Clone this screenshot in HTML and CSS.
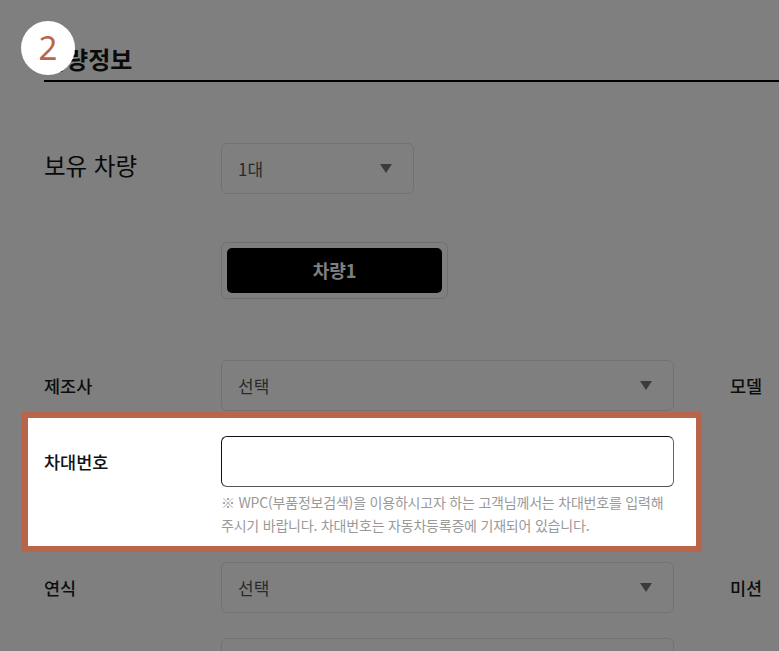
FILE: index.html
```html
<!DOCTYPE html>
<html lang="ko">
<head>
<meta charset="utf-8">
<title>차량정보</title>
<link rel="stylesheet" href="styles.css">
</head>
<body>
<div class="page">
  <div class="badge">2</div>
  <h2 class="title">차량정보</h2>

  <div class="row row-count">
    <div class="label label-lg">보유 차량</div>
    <div class="select select-sm"><span>1대</span><i class="arrow"></i></div>
  </div>

  <div class="row row-tabs">
    <div class="label"></div>
    <div class="tabs"><div class="tab">차량1</div></div>
  </div>

  <div class="row">
    <div class="label">제조사</div>
    <div class="select"><span>선택</span><i class="arrow"></i></div>
    <div class="label2">모델</div>
  </div>

  <div class="row row-vin">
    <div class="highlight"></div>
    <div class="label label-strong">차대번호</div>
    <div class="field">
      <div class="input"></div>
      <p class="help">※ WPC(부품정보검색)을 이용하시고자 하는 고객님께서는 차대번호를 입력해<br>주시기 바랍니다. 차대번호는 자동차등록증에 기재되어 있습니다.</p>
    </div>
  </div>

  <div class="row">
    <div class="label">연식</div>
    <div class="select"><span>선택</span><i class="arrow"></i></div>
    <div class="label2">미션</div>
  </div>

  <div class="row">
    <div class="label"></div>
    <div class="select"><span></span></div>
  </div>
</div>
</body>
</html>
```
FILE: styles.css
```css
html, body {
  margin: 0;
  padding: 0;
  background: #ffffff;
  overflow: hidden;
}

body {
  width: 779px;
  height: 651px;
  font-family: "Noto Sans CJK KR", "Noto Sans", sans-serif;
  color: #222;
}

.page {
  position: relative;
  width: 1000px;
  padding: 44px 0 0 44px;
  box-sizing: border-box;
}

.badge {
  position: absolute;
  left: 21px;
  top: 21px;
  width: 54px;
  height: 54px;
  border-radius: 50%;
  background: #fff;
  color: #b9654b;
  font-family: "Noto Sans", sans-serif;
  font-size: 33px;
  line-height: 54px;
  text-align: center;
  z-index: 10;
}

.title {
  margin: 0;
  font-size: 24px;
  font-weight: 700;
  line-height: 30px;
  color: #151515;
  padding-bottom: 6px;
  border-bottom: 2px solid #000;
}

.row {
  display: flex;
  align-items: flex-start;
  margin-bottom: 25px;
}

.row-count {
  margin-top: 61px;
  margin-bottom: 48px;
}

.row-tabs {
  margin-bottom: 61px;
}

.label {
  width: 177px;
  flex: none;
  font-size: 17.5px;
  font-weight: 500;
  line-height: 51px;
  color: #1a1a1a;
  white-space: nowrap;
}

.label-lg {
  font-size: 23.5px;
  font-weight: 400;
  line-height: 44px;
  color: #111;
}

.label-strong {
  font-weight: 500;
  color: #111;
}

.label2 {
  margin-left: 56px;
  font-size: 17.5px;
  font-weight: 500;
  line-height: 51px;
  color: #1a1a1a;
  white-space: nowrap;
}

.select {
  width: 453px;
  height: 51px;
  box-sizing: border-box;
  border: 1px solid #e2e2e2;
  border-radius: 6px;
  background: #fff;
  display: flex;
  align-items: center;
  justify-content: space-between;
  padding: 0 21px 0 16px;
  font-size: 17px;
  color: #555;
  flex: none;
}

.select-sm {
  width: 193px;
}

.arrow {
  width: 0;
  height: 0;
  border-left: 6px solid transparent;
  border-right: 6px solid transparent;
  border-top: 9px solid #777;
}

.tabs {
  width: 227px;
  height: 57px;
  box-sizing: border-box;
  border: 1px solid #e0e0e0;
  border-radius: 6px;
  padding: 5px;
}

.tab {
  height: 45px;
  border-radius: 5px;
  background: #000;
  color: #fff;
  font-size: 18px;
  font-weight: 700;
  line-height: 45px;
  text-align: center;
}

.row-vin {
  position: relative;
  width: 630px;
}

.highlight {
  position: absolute;
  left: -22px;
  top: -24px;
  right: -28px;
  bottom: -15px;
  border: 6px solid #b9654b;
  box-sizing: border-box;
  box-shadow: 0 0 0 2000px rgba(0, 0, 0, 0.5);
  z-index: 5;
  pointer-events: none;
}

.field {
  width: 453px;
  flex: none;
}

.input {
  height: 51px;
  box-sizing: border-box;
  border: 1px solid;
  border-color: #111 #666 #555 #111;
  border-radius: 6px;
  background: #fff;
}

.help {
  margin: 4px 0 0;
  font-size: 14px;
  line-height: 23px;
  color: #999;
  white-space: nowrap;
  letter-spacing: -0.2px;
}
```
